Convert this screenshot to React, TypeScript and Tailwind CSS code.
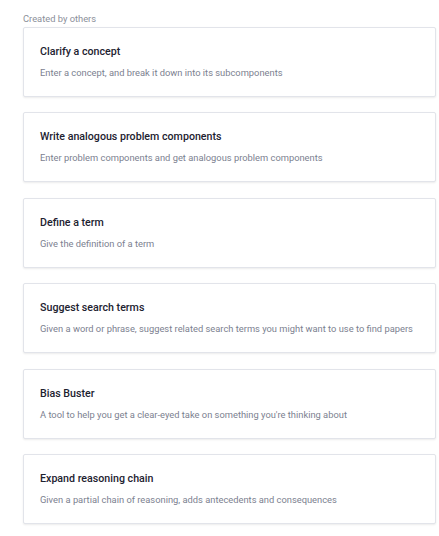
import React from "react";

const templates = [
  { title: "Clarify a concept", description: "Enter a concept, and break it down into its subcomponents" },
  { title: "Write analogous problem components", description: "Enter problem components and get analogous problem components" },
  { title: "Define a term", description: "Give the definition of a term" },
  { title: "Suggest search terms", description: "Given a word or phrase, suggest related search terms you might want to use to find papers" },
  { title: "Bias Buster", description: "A tool to help you get a clear-eyed take on something you're thinking about" },
  { title: "Expand reasoning chain", description: "Given a partial chain of reasoning, adds antecedents and consequences" },
];

export default function App() {
  return (
    <div className="min-h-screen bg-white pl-[23px] pr-[3px] pt-[13px] font-['Roboto',sans-serif]">
      <div className="text-[9.33px] leading-[12px] text-[#8b8f9a]">Created by others</div>
      <div className="mt-[2px] flex flex-col gap-[15.4px]">
        {templates.map((t) => (
          <div
            key={t.title}
            className="h-[70px] rounded-[2px] border border-[#e2e4ea] bg-white px-4 pt-[17px] shadow-[0_1px_2px_rgba(0,0,0,0.08)]"
          >
            <h3 className="text-[10.67px] font-medium leading-[13px] text-[#1d2230]">{t.title}</h3>
            <p className="mt-[9px] text-[9.33px] leading-[12px] text-[#7c8190]">{t.description}</p>
          </div>
        ))}
      </div>
    </div>
  );
}
